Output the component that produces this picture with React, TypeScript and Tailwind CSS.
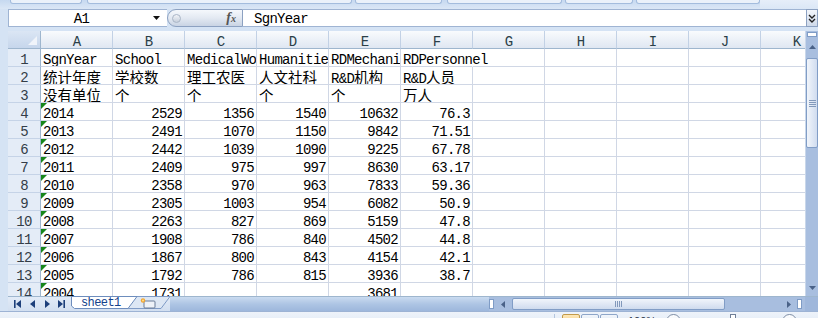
import React from "react";

const MONO = "font-['Liberation_Mono','Noto_Sans_CJK_SC',monospace]";

const COLS = ["A", "B", "C", "D", "E", "F", "G", "H", "I", "J", "K"];

const ROWS: string[][] = [
  ["SgnYear", "School", "MedicalWorker", "Humanities", "RDMechanism", "RDPersonnel"],
  ["统计年度", "学校数", "理工农医", "人文社科", "R&D机构", "R&D人员"],
  ["没有单位", "个", "个", "个", "个", "万人"],
  ["2014", "2529", "1356", "1540", "10632", "76.3"],
  ["2013", "2491", "1070", "1150", "9842", "71.51"],
  ["2012", "2442", "1039", "1090", "9225", "67.78"],
  ["2011", "2409", "975", "997", "8630", "63.17"],
  ["2010", "2358", "970", "963", "7833", "59.36"],
  ["2009", "2305", "1003", "954", "6082", "50.9"],
  ["2008", "2263", "827", "869", "5159", "47.8"],
  ["2007", "1908", "786", "840", "4502", "44.8"],
  ["2006", "1867", "800", "843", "4154", "42.1"],
  ["2005", "1792", "786", "815", "3936", "38.7"],
  ["2004", "1731", "", "", "3681", ""],
];

function Txt({ s }: { s: string }) {
  const parts = s.split(/([\u3000-\u9fff]+)/);
  return (
    <>
      {parts.map((p, i) =>
        /[\u3000-\u9fff]/.test(p) ? (
          <span key={i} className="font-['Noto_Sans_CJK_SC',sans-serif] text-[14.5px] tracking-normal leading-[17px]">
            {p}
          </span>
        ) : (
          <React.Fragment key={i}>{p}</React.Fragment>
        )
      )}
    </>
  );
}

function GreenTri() {
  return (
    <svg className="absolute left-0 top-0" width="6" height="6" viewBox="0 0 6 6">
      <polygon points="0,0 6,0 0,6" fill="#18861a" />
    </svg>
  );
}

function Cell({ text, rowIdx, colIdx }: { text: string; rowIdx: number; colIdx: number }) {
  const isNum = rowIdx >= 3 && colIdx >= 1 && colIdx <= 5;
  const isTextNum = rowIdx >= 3 && colIdx === 0;
  const overflow = rowIdx === 0 && colIdx === 5;
  const cjkRow = rowIdx === 1 || rowIdx === 2;
  return (
    <div
      className={
        "relative w-[72px] h-[18px] shrink-0 border-b border-r border-b-[#d0d7e5] whitespace-nowrap leading-[17px] " +
        (cjkRow ? "pt-[1px] " : "pt-[3px] ") +
        (overflow ? "overflow-visible z-10 border-r-transparent " : "overflow-hidden border-r-[#d0d7e5] ") +
        (isNum ? "text-right pr-[2px]" : "text-left pl-[2px]")
      }
    >
      {isTextNum && <GreenTri />}
      <Txt s={text} />
    </div>
  );
}

function RibbonBox({ w, ml }: { w: string; ml: string }) {
  return <div className={"h-[4px] rounded-b-[3px] bg-[#eaf1fa] border border-t-0 border-[#a3bcdd] shrink-0 " + w + " " + ml} />;
}

function VScroll() {
  return (
    <div className="w-[13px] shrink-0 flex flex-col bg-[#a8bedf] border-l border-[#c9d7ea]">
      <div className="h-[5px] mx-[1px] mt-[1px] bg-white border border-[#7f9cc6] shrink-0" />
      <div className="h-[19px] shrink-0 flex items-center justify-center">
        <svg width="7" height="4" viewBox="0 0 7 4">
          <polygon points="0,4 7,4 3.5,0" fill="#4a6288" />
        </svg>
      </div>
      <div className="h-[90px] mt-[2px] shrink-0 rounded-[2px] border border-[#819dc6] bg-gradient-to-r from-[#f1f5fb] to-[#d0dcef] flex flex-col items-center justify-center gap-[1px]">
        <div className="w-[7px] h-[1px] bg-[#8299bb]" />
        <div className="w-[7px] h-[1px] bg-[#8299bb]" />
        <div className="w-[7px] h-[1px] bg-[#8299bb]" />
        <div className="w-[7px] h-[1px] bg-[#8299bb]" />
      </div>
      <div className="flex-1" />
      <div className="h-[17px] shrink-0 flex items-center justify-center">
        <svg width="7" height="4" viewBox="0 0 7 4">
          <polygon points="0,0 7,0 3.5,4" fill="#4a6288" />
        </svg>
      </div>
    </div>
  );
}

export default function App() {
  return (
    <div className={"w-[818px] h-[318px] overflow-hidden bg-[#d5e3f4] flex flex-col text-[14px] tracking-[-0.7px] text-black " + MONO}>
      {/* ribbon remnants */}
      <div className="h-[9px] shrink-0 flex items-start bg-gradient-to-b from-[#c6d9f0] to-[#dbe7f6]">
        <RibbonBox w="w-[72px]" ml="ml-[10px]" />
        <RibbonBox w="w-[265px]" ml="ml-[5px]" />
        <RibbonBox w="w-[87px]" ml="ml-[3px]" />
        <RibbonBox w="w-[115px]" ml="ml-[5px]" />
        <RibbonBox w="w-[68px]" ml="ml-[3px]" />
        <RibbonBox w="w-[124px]" ml="ml-[3px]" />
        <div className="flex-1 h-[9px] bg-gradient-to-b from-[#e6eef9] to-[#dbe7f6]" />
      </div>

      {/* formula bar */}
      <div className="h-[18px] shrink-0 flex ml-[8px]">
        <div className="w-[159px] shrink-0 bg-white border-y border-l border-[#9fb4d3] flex items-center">
          <span className="flex-1 text-center leading-[16px] pl-[1px] pt-[2px]">A1</span>
          <svg className="mr-[7px]" width="7" height="4" viewBox="0 0 7 4">
            <polygon points="0,0 7,0 3.5,4" fill="#111" />
          </svg>
        </div>
        <div className="w-[76px] shrink-0 rounded-l-full border border-[#8ca1c1] bg-gradient-to-b from-[#f5f8fc] via-[#e3e9f2] to-[#c9d4e4] flex items-center justify-between pl-[4px] pr-[6px]">
          <span className="w-[9px] h-[9px] rounded-full border border-[#a9b5c6] bg-gradient-to-b from-[#f2f4f8] to-[#c6cfdc]" />
          <span className="font-['Liberation_Serif',serif] italic font-bold text-[14px] text-[#555] tracking-normal leading-[14px]">
            f<span className="text-[10px]">x</span>
          </span>
        </div>
        <div className="flex-1 bg-white border-y border-[#9fb4d3] flex items-center pl-[11px] pt-[2px] leading-[16px]">SgnYear</div>
        <div className="w-[12px] shrink-0 border border-[#8ca1c1] bg-gradient-to-b from-[#f3f6fb] to-[#cfdaea] flex items-center justify-center">
          <svg width="8" height="9" viewBox="0 0 8 9">
            <polyline points="1,1 4,4 7,1" fill="none" stroke="#222" strokeWidth="1.4" />
            <polyline points="1,5 4,8 7,5" fill="none" stroke="#222" strokeWidth="1.4" />
          </svg>
        </div>
      </div>

      <div className="h-[4px] shrink-0" />

      {/* main grid area */}
      <div className="h-[265px] shrink-0 flex">
        <div className="w-[8px] shrink-0" />
        <div className="w-[797px] shrink-0 bg-white overflow-hidden flex flex-col">
          {/* column headers */}
          <div className="flex h-[18px] shrink-0">
            <div className="relative w-[33px] h-[18px] shrink-0 bg-gradient-to-b from-[#dbe6f4] to-[#c6d6ec] border-r border-b border-[#9eb6ce]">
              <svg className="absolute right-[3px] bottom-[3px]" width="9" height="9" viewBox="0 0 9 9">
                <polygon points="9,0 9,9 0,9" fill="#f0f4fa" />
              </svg>
            </div>
            {COLS.map((c) => (
              <div
                key={c}
                className="w-[72px] h-[18px] shrink-0 text-center leading-[17px] pt-[3px] overflow-hidden text-[#2a3f48] bg-gradient-to-b from-[#f9fbfd] to-[#dfe7f2] border-r border-r-[#c2d1e5] border-b border-b-[#9eb6ce]"
              >
                {c}
              </div>
            ))}
          </div>
          {ROWS.map((r, ri) => (
            <div key={ri} className="flex h-[18px] shrink-0">
              <div className="w-[33px] h-[18px] shrink-0 text-center leading-[17px] pt-[3px] overflow-hidden text-[#333d48] bg-[#e4ecf7] border-r border-r-[#9eb6ce] border-b border-b-[#c5d3e7]">
                {ri + 1}
              </div>
              {COLS.map((c, ci) => (
                <Cell key={c} text={r[ci] ?? ""} rowIdx={ri} colIdx={ci} />
              ))}
            </div>
          ))}
        </div>
        <VScroll />
      </div>

      {/* sheet tabs + horizontal scroll */}
      <div className="h-[15px] shrink-0 flex">
        <div className="w-[8px] shrink-0" />
        <div className="w-[62px] shrink-0 bg-gradient-to-b from-[#e2ebf7] to-[#d2dff0] border-t border-[#9eb6ce] flex items-center">
          <svg width="62" height="14" viewBox="0 0 62 14">
            <rect x="6" y="3" width="1.6" height="8" fill="#1d3f7a" />
            <polygon points="13,3 13,11 8,7" fill="#1d3f7a" />
            <polygon points="27,3 27,11 22,7" fill="#1d3f7a" />
            <polygon points="37,3 37,11 42,7" fill="#1d3f7a" />
            <polygon points="50,3 50,11 55,7" fill="#1d3f7a" />
            <rect x="55.4" y="3" width="1.6" height="8" fill="#1d3f7a" />
          </svg>
        </div>
        <div className="relative w-[100px] shrink-0 bg-gradient-to-b from-[#e2ebf7] to-[#d2dff0] border-t border-[#9eb6ce]">
          <svg className="absolute left-0 top-[-1px]" width="100" height="15" viewBox="0 0 100 15">
            <polygon points="58,0.5 100,0.5 91,12.5 50,12.5" fill="#dde7f4" stroke="#7f9bc6" strokeWidth="1" />
            <polygon points="1.5,0.5 67,0.5 58,12.5 4.5,12.5 1.5,10" fill="#ffffff" stroke="#6d8dbd" strokeWidth="1" />
            <rect x="74" y="5" width="11" height="7" rx="1" fill="#eef2f8" stroke="#6b7d98" strokeWidth="1" />
            <circle cx="73" cy="4.5" r="2.2" fill="#f2a533" />
            <circle cx="73" cy="4.5" r="1" fill="#ffe08a" />
          </svg>
          <span className="absolute left-[11px] top-[0px] text-[12px] leading-[13px] tracking-[-0.6px] text-[#15428b] font-['Liberation_Mono',monospace]">
            sheet1
          </span>
        </div>
        <div className="w-[319px] shrink-0 bg-gradient-to-b from-[#cadbf0] via-[#aec5e4] to-[#9db7dc] border-t border-[#9eb6ce]" />
        {/* horizontal scrollbar */}
        <div className="w-[316px] shrink-0 flex items-center bg-[#a8bedf] border-t border-[#9eb6ce]">
          <div className="w-[5px] h-[10px] shrink-0 bg-white border border-[#7f9cc6]" />
          <div className="w-[17px] shrink-0 flex items-center justify-center">
            <svg width="4" height="7" viewBox="0 0 4 7">
              <polygon points="4,0 4,7 0,3.5" fill="#4a6288" />
            </svg>
          </div>
          <div className="w-[213px] h-[12px] ml-[1px] shrink-0 rounded-[2px] border border-[#819dc6] bg-gradient-to-b from-[#f1f5fb] to-[#cfdbee] flex items-center justify-center gap-[1px]">
            <div className="w-[1px] h-[6px] bg-[#8299bb]" />
            <div className="w-[1px] h-[6px] bg-[#8299bb]" />
            <div className="w-[1px] h-[6px] bg-[#8299bb]" />
            <div className="w-[1px] h-[6px] bg-[#8299bb]" />
          </div>
          <div className="flex-1" />
          <div className="w-[17px] shrink-0 flex items-center justify-center">
            <svg width="4" height="7" viewBox="0 0 4 7">
              <polygon points="0,0 0,7 4,3.5" fill="#4a6288" />
            </svg>
          </div>
          <div className="w-[5px] h-[10px] shrink-0 bg-white border border-[#7f9cc6]" />
          <div className="w-[3px] shrink-0" />
        </div>
        <div className="flex-1 bg-[#9fb7db] border-t border-[#9eb6ce]" />
      </div>

      {/* status bar */}
      <div className="h-[22px] shrink-0 flex items-start border-t border-[#9db3d4] bg-gradient-to-b from-[#eef3fa] to-[#dbe6f4] pt-[2px]">
        <div className="w-[555px] shrink-0 h-[18px] border-r border-[#b4c6df]" />
        <div className="ml-[7px] flex gap-[1px]">
          <div className="w-[18px] h-[14px] rounded-[2px] border border-[#c29a4b] bg-gradient-to-b from-[#fde8b8] to-[#f7c66b]" />
          <div className="w-[18px] h-[14px] rounded-[2px] border border-[#8ea6c9] bg-gradient-to-b from-[#f2f6fb] to-[#d5e0ef]" />
          <div className="w-[18px] h-[14px] rounded-[2px] border border-[#8ea6c9] bg-gradient-to-b from-[#f2f6fb] to-[#d5e0ef]" />
        </div>
        <span className="ml-[10px] text-[11px] leading-[14px] tracking-normal text-[#1e2e44] font-['Liberation_Sans',sans-serif]">100%</span>
        <div className="ml-[10px] w-[15px] h-[15px] rounded-full border border-[#7d8da5] bg-gradient-to-b from-[#ffffff] to-[#dbe3ee]" />
        <div className="ml-[49px] w-[6px] h-[12px] border border-[#6f7f98] bg-white" />
        <div className="ml-[46px] w-[15px] h-[15px] rounded-full border border-[#7d8da5] bg-gradient-to-b from-[#ffffff] to-[#dbe3ee]" />
      </div>
    </div>
  );
}
